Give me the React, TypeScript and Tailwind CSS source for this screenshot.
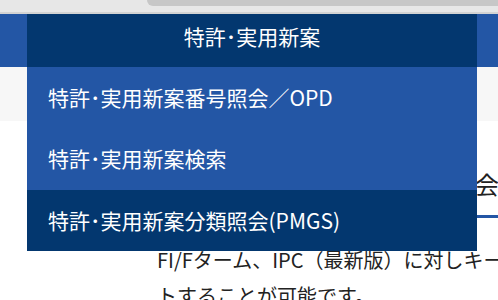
import React from "react";

const jp = { fontFamily: '"Noto Sans CJK JP", "Noto Sans", sans-serif' };

export default function App() {
  return (
    <div className="relative h-[300px] w-[498px] overflow-hidden bg-white" style={jp}>
      {/* top chrome strip */}
      <div className="h-[12px] bg-[#e7e7e7]">
        <div className="ml-[147px] h-[6px] rounded-bl-[8px] bg-[#c7c7c7]" />
      </div>
      <div className="h-[2px] bg-[#d3d3d3]" />
      {/* global nav bar */}
      <div className="h-[53px] bg-[#2356a5]" />
      {/* breadcrumb strip */}
      <div className="h-[54px] bg-[#f7f7f7]" />
      {/* content */}
      <div className="pl-[157px] whitespace-nowrap text-[#222]">
        <div className="mt-[45px] border-b-[3px] border-[#2356a5] pb-[13px] pl-[78px] text-[24px] leading-[36px]">
          特許・実用新案分類照会（PMGS）
        </div>
        <div className="mt-[24px] text-[20px] leading-[36px]">
          <div>FI/Fターム、IPC（最新版）に対しキーワード検索をしてリス</div>
          <div>トすることが可能です。</div>
        </div>
      </div>

      {/* dropdown menu */}
      <div className="absolute left-[27px] top-[14px] w-[450px] text-[21px] text-white">
        <div className="h-[53px] bg-[#03376f] pt-[7px] text-center leading-[30px]">特許･実用新案</div>
        <div className="flex h-[61px] items-center bg-[#2356a5] pl-[21px]">特許･実用新案番号照会／OPD</div>
        <div className="flex h-[62px] items-center bg-[#2356a5] pl-[21px]">特許･実用新案検索</div>
        <div className="flex h-[61px] items-center bg-[#03376f] pl-[21px]">特許･実用新案分類照会(PMGS)</div>
      </div>
    </div>
  );
}
